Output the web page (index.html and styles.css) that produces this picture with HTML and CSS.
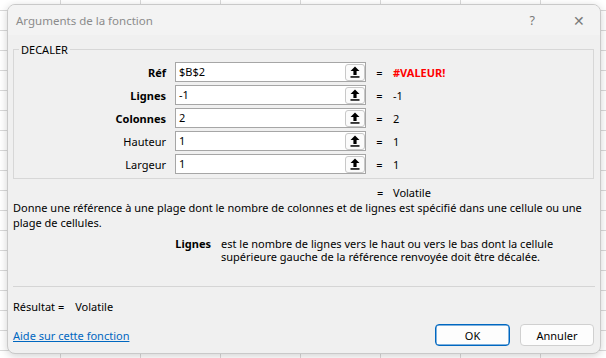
FILE: index.html
```html
<!DOCTYPE html>
<html lang="fr">
<head>
<meta charset="utf-8">
<title>Arguments de la fonction</title>
<link rel="stylesheet" href="styles.css">
</head>
<body>
<div class="sheet"></div>
<div class="dialog">
  <div class="titlebar">
    <span class="title">Arguments de la fonction</span>
    <span class="tb-btns"><span class="help">?</span><span class="close">✕</span></span>
  </div>
  <div class="body">
    <div class="group">
      <span class="legend">DECALER</span>
      <div class="args">
        <span class="lbl bold">Réf</span>
        <div class="field"><span class="fv">$B$2</span><span class="pick"><svg width="10" height="12" viewBox="0 0 10 12"><path d="M5 0.5 L9.5 5 H6.6 V9 H3.4 V5 H0.5 Z" fill="#000"/><rect x="0.5" y="10.2" width="9" height="1.5" fill="#000"/></svg></span></div>
        <span class="eq">=</span><span class="val err">#VALEUR!</span>

        <span class="lbl bold">Lignes</span>
        <div class="field"><span class="fv">-1</span><span class="pick"><svg width="10" height="12" viewBox="0 0 10 12"><path d="M5 0.5 L9.5 5 H6.6 V9 H3.4 V5 H0.5 Z" fill="#000"/><rect x="0.5" y="10.2" width="9" height="1.5" fill="#000"/></svg></span></div>
        <span class="eq">=</span><span class="val">-1</span>

        <span class="lbl bold">Colonnes</span>
        <div class="field"><span class="fv">2</span><span class="pick"><svg width="10" height="12" viewBox="0 0 10 12"><path d="M5 0.5 L9.5 5 H6.6 V9 H3.4 V5 H0.5 Z" fill="#000"/><rect x="0.5" y="10.2" width="9" height="1.5" fill="#000"/></svg></span></div>
        <span class="eq">=</span><span class="val">2</span>

        <span class="lbl">Hauteur</span>
        <div class="field"><span class="fv">1</span><span class="pick"><svg width="10" height="12" viewBox="0 0 10 12"><path d="M5 0.5 L9.5 5 H6.6 V9 H3.4 V5 H0.5 Z" fill="#000"/><rect x="0.5" y="10.2" width="9" height="1.5" fill="#000"/></svg></span></div>
        <span class="eq">=</span><span class="val">1</span>

        <span class="lbl">Largeur</span>
        <div class="field"><span class="fv">1</span><span class="pick"><svg width="10" height="12" viewBox="0 0 10 12"><path d="M5 0.5 L9.5 5 H6.6 V9 H3.4 V5 H0.5 Z" fill="#000"/><rect x="0.5" y="10.2" width="9" height="1.5" fill="#000"/></svg></span></div>
        <span class="eq">=</span><span class="val">1</span>
      </div>
    </div>
    <div class="result-row"><span class="req">=</span><span class="rval">Volatile</span></div>
    <p class="desc">Donne une référence à une plage dont le nombre de colonnes et de lignes est spécifié dans une cellule ou une plage de cellules.</p>
    <div class="argdesc">
      <span class="argname">Lignes</span>
      <span class="argtext">est le nombre de lignes vers le haut ou vers le bas dont la cellule supérieure gauche de la référence renvoyée doit être décalée.</span>
    </div>
    <div class="sep"></div>
    <div class="final"><span>Résultat =</span><span class="fval">Volatile</span></div>
    <div class="footer">
      <a class="help-link" href="#">Aide sur cette fonction</a>
      <div class="buttons">
        <button class="btn default">OK</button>
        <button class="btn">Annuler</button>
      </div>
    </div>
  </div>
</div>
</body>
</html>
```
FILE: styles.css
```css
* { box-sizing: border-box; }
html, body {
  margin: 0;
  padding: 0;
  width: 606px;
  height: 358px;
  overflow: hidden;
}
body {
  font-family: "Noto Sans", "Open Sans", sans-serif;
  font-size: 11px;
  line-height: 15px;
  color: #000;
  background: #fff;
  position: relative;
}
.sheet {
  position: absolute;
  inset: 0;
  background-color: #fff;
  background-image:
    linear-gradient(to right, #d9d9d9 1px, transparent 1px),
    linear-gradient(to bottom, #d9d9d9 1px, transparent 1px);
  background-size: 80px 20px;
  background-position: 60px 10px;
}
.dialog {
  position: absolute;
  left: 7px;
  top: 4px;
  width: 594px;
  height: 350px;
  background: #f0f0f0;
  border: 1px solid #c9c9c9;
  border-radius: 8px;
  box-shadow: 0 2px 8px rgba(0,0,0,0.18);
  overflow: hidden;
  display: flex;
  flex-direction: column;
}
.titlebar {
  height: 30px;
  flex: none;
  background: #f3f3f3;
  display: flex;
  align-items: center;
  justify-content: space-between;
  padding-left: 8px;
}
.title {
  font-size: 11.5px;
  color: #8b8b8b;
}
.tb-btns {
  display: flex;
  align-items: center;
  color: #7a7a7a;
}
.help { font-size: 12.5px; margin-right: 38px; }
.close { font-size: 14px; margin-right: 15px; }
.body {
  flex: 1;
  display: flex;
  flex-direction: column;
  padding: 0 6px 0 5px;
}
.group {
  position: relative;
  flex: none;
  margin-top: 14px;
  height: 130px;
  border: 1px solid #d7d7d7;
  padding: 12px 0 0 0;
}
.legend {
  position: absolute;
  left: 5px;
  top: -8px;
  padding: 0 2px;
  background: #f0f0f0;
  line-height: 15px;
}
.args {
  display: grid;
  grid-template-columns: 161px 191px 27px auto;
  row-gap: 3px;
  grid-auto-rows: 20px;
  align-items: center;
}
.lbl {
  text-align: right;
  padding-right: 9px;
}
.bold { font-weight: bold; }
.field {
  height: 20px;
  width: 191px;
  background: #fff;
  border: 1px solid #a6a6a6;
  display: flex;
  align-items: center;
  justify-content: space-between;
  padding-left: 3px;
}
.fv { line-height: 16px; }
.pick {
  width: 20px;
  height: 17px;
  border: 1px solid #c8c8c8;
  border-radius: 3px;
  background: #fbfbfb;
  display: flex;
  align-items: center;
  justify-content: center;
}
.pick svg { display: block; }
.eq { justify-self: center; }
.err { color: #ff0000; font-weight: bold; }
.result-row {
  margin-top: 6px;
  padding-left: 364px;
  display: flex;
}
.req { width: 16px; }
.desc {
  margin: 0;
}
.argdesc {
  margin-top: 7px;
  display: grid;
  grid-template-columns: 198px 340px;
  column-gap: 10px;
  line-height: 13px;
}
.argname { text-align: right; font-weight: bold; }
.sep {
  margin-top: 23px;
  height: 1px;
  background: #d5d5d5;
  margin-right: -1px;
  flex: none;
}
.final {
  margin-top: 12px;
  display: flex;
}
.fval { margin-left: 11px; }
.footer {
  margin-top: 10px;
  display: flex;
  justify-content: space-between;
  align-items: center;
}
.help-link {
  color: #0067c0;
  text-decoration: underline;
}
.buttons {
  display: flex;
  gap: 10px;
}
.btn {
  font: inherit;
  color: #000;
  height: 22px;
  width: 74px;
  background: #fdfdfd;
  border: 1px solid #d0d0d0;
  border-radius: 4px;
  padding: 0;
}
.btn.default {
  width: 75px;
  border: 1px solid #0067c0;
  box-shadow: inset 0 0 0 0.5px #0067c0;
}
```
